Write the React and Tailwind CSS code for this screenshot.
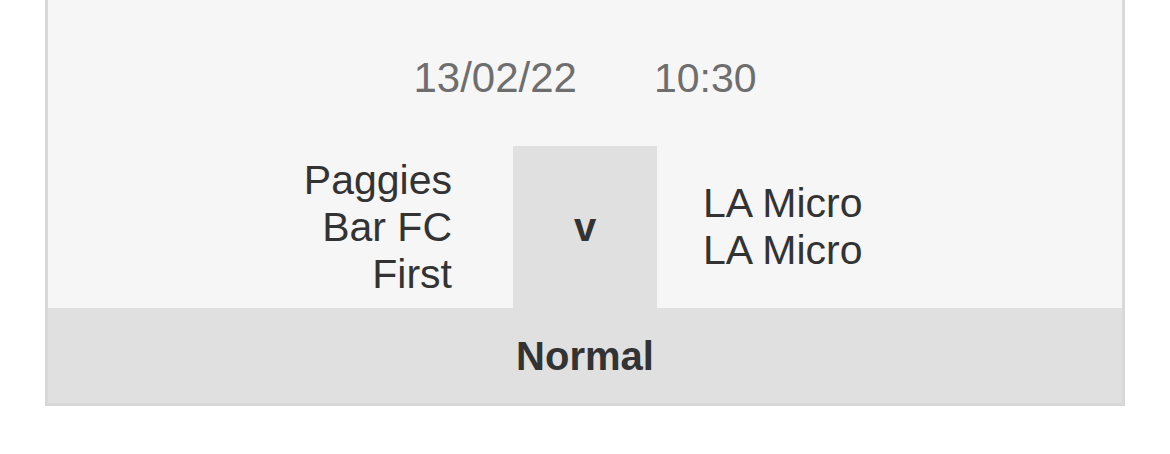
export default function App() {
  return (
    <div className="w-[1170px] h-[454px] bg-white" style={{ fontFamily: '"Liberation Sans", Arial, sans-serif' }}>
      <div className="ml-[45px] w-[1080px] border-x-[3px] border-b-[3px] border-[#d8d8d8] bg-[#f6f6f6]">
        <div className="flex justify-center gap-[77px] pt-[54px] text-[42px] leading-[48px] text-[#6e6e6e]">
          <span>13/02/22</span>
          <span className="text-[41px]">10:30</span>
        </div>
        <div className="mt-[44px] grid h-[162px] grid-cols-[1fr_144px_1fr] text-[41px] leading-[47px] text-[#333333]">
          <div className="flex items-center justify-end pr-[61px]">
            <div className="w-[205px] text-right">Paggies Bar FC First</div>
          </div>
          <div className="flex items-center justify-center bg-[#e0e0e0] text-[40px] font-bold">v</div>
          <div className="flex items-center pl-[46px]">
            <div className="w-[205px]">LA Micro LA Micro</div>
          </div>
        </div>
        <div className="flex h-[95px] items-center justify-center bg-[#e0e0e0] text-[40px] font-bold text-[#333333]">
          Normal
        </div>
      </div>
    </div>
  );
}
